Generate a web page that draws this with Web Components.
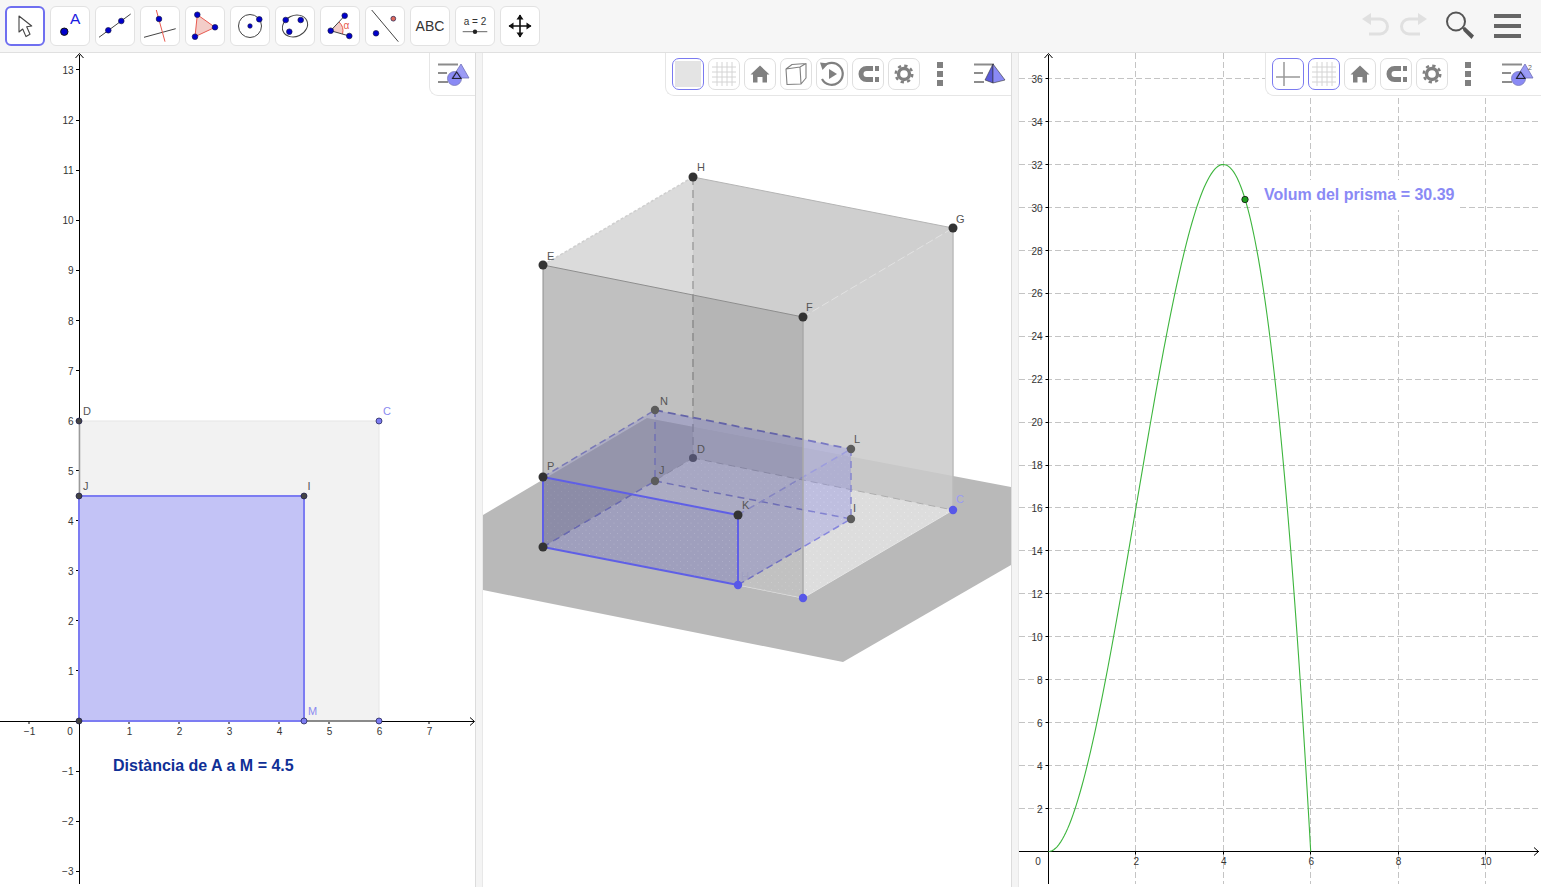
<!DOCTYPE html>
<html>
<head>
<meta charset="utf-8">
<title>GeoGebra</title>
<style>
  html, body { margin: 0; height: 100%; overflow: hidden; background: #fff; font-family: "Liberation Sans", Arial, sans-serif; }
</style>
</head>
<body>
<ggb-app>
  <ggb-toolbar slot="toolbar">
    <ggb-tool icon="move" selected></ggb-tool>
    <ggb-tool icon="point"></ggb-tool>
    <ggb-tool icon="line"></ggb-tool>
    <ggb-tool icon="perp"></ggb-tool>
    <ggb-tool icon="polygon"></ggb-tool>
    <ggb-tool icon="circle"></ggb-tool>
    <ggb-tool icon="conic"></ggb-tool>
    <ggb-tool icon="angle"></ggb-tool>
    <ggb-tool icon="reflect"></ggb-tool>
    <ggb-tool icon="text"></ggb-tool>
    <ggb-tool icon="slider"></ggb-tool>
    <ggb-tool icon="pan"></ggb-tool>
  </ggb-toolbar>
  <ggb-panel slot="left" style="width:475px">
    <ggb-square-view></ggb-square-view>
    <ggb-stylebar slot="bar" view="plane"></ggb-stylebar>
  </ggb-panel>
  <ggb-panel slot="middle" style="width:528px">
    <ggb-prism-view></ggb-prism-view>
    <ggb-stylebar slot="bar" view="solid" more>
      <ggb-style-btn icon="plane" active></ggb-style-btn>
      <ggb-style-btn icon="grid"></ggb-style-btn>
      <ggb-style-btn icon="home"></ggb-style-btn>
      <ggb-style-btn icon="cube"></ggb-style-btn>
      <ggb-style-btn icon="rotate"></ggb-style-btn>
      <ggb-style-btn icon="magnet"></ggb-style-btn>
      <ggb-style-btn icon="gear"></ggb-style-btn>
    </ggb-stylebar>
  </ggb-panel>
  <ggb-panel slot="right" style="width:522px">
    <ggb-volume-view></ggb-volume-view>
    <ggb-stylebar slot="bar" view="plane2" more style="padding-right:6px">
      <ggb-style-btn icon="axes" active></ggb-style-btn>
      <ggb-style-btn icon="grid" active></ggb-style-btn>
      <ggb-style-btn icon="home"></ggb-style-btn>
      <ggb-style-btn icon="magnet"></ggb-style-btn>
      <ggb-style-btn icon="gear"></ggb-style-btn>
    </ggb-stylebar>
  </ggb-panel>
</ggb-app>

<script>
const BLUE = "#0000cc";
const dot = (x, y, r = 2.800, fill = BLUE) => `<circle cx="${x}" cy="${y}" r="${r}" fill="${fill}" stroke="#1a1a4a" stroke-width=".7"/>`;
const ln = (a, b, c, d, stroke = "#444", w = 1, extra = "") => `<line x1="${a}" y1="${b}" x2="${c}" y2="${d}" stroke="${stroke}" stroke-width="${w}" ${extra}/>`;
const txt = (x, y, s, size, fill, extra = "") => `<text x="${x}" y="${y}" font-size="${size}" fill="${fill}" font-family="'Liberation Sans', Arial, sans-serif" ${extra}>${s}</text>`;
const pts = list => list.map(p => p.join(",")).join(" ");
const crisp = v => Math.floor(v) + .5;

class GgbApp extends HTMLElement {
  constructor() {
    super();
    this.attachShadow({ mode: "open" });
    this.shadowRoot.innerHTML = `
      <style>
        :host { display: flex; flex-direction: column; width: 1541px; height: 887px; }
        .views { display: flex; flex: 1; min-height: 0; }
        .gutter { flex: none; width: 6px; background: #f4f4f4; border-left: 1px solid #dcdcdc; border-right: 1px solid #e8e8e8; }
      </style>
      <slot name="toolbar"></slot>
      <div class="views">
        <slot name="left"></slot>
        <div class="gutter"></div>
        <slot name="middle"></slot>
        <div class="gutter"></div>
        <slot name="right"></slot>
      </div>
    `;
  }
}

class GgbToolbar extends HTMLElement {
  constructor() {
    super();
    this.attachShadow({ mode: "open" });
    this.shadowRoot.innerHTML = `
      <style>
        :host { display: flex; align-items: center; flex: none; box-sizing: border-box; height: 53px; padding: 0 20px 1px 5px; background: #f6f6f6; border-bottom: 1px solid #e0e0e0; }
        .tools { display: flex; gap: 5px; }
        .actions { display: flex; align-items: center; margin-left: auto; }
        svg { display: block; }
        .redo { margin-left: 9px; }
        .search { margin-left: 18px; }
        .menu { margin-left: 19px; }
      </style>
      <div class="tools"><slot></slot></div>
      <div class="actions">
        <svg width="28" height="26" viewBox="0 0 28 26"><path d="M8 6H18a7.500 7.500 0 0 1 0 15H7" fill="none" stroke="#e0e0e0" stroke-width="3"/><path d="M0 6 9 0V12Z" fill="#e0e0e0"/></svg>
        <svg class="redo" width="28" height="26" viewBox="0 0 28 26"><path d="M20 6H10a7.500 7.500 0 0 0 0 15H21" fill="none" stroke="#e0e0e0" stroke-width="3"/><path d="M28 6 19 0V12Z" fill="#e0e0e0"/></svg>
        <svg class="search" width="30" height="30" viewBox="0 0 30 30"><circle cx="11" cy="10.500" r="9" fill="none" stroke="#555" stroke-width="2"/><path d="M17.500 17 20 16 29 24.500 26.500 28 18.500 20Z" fill="#555"/></svg>
        <svg class="menu" width="27" height="24" viewBox="0 0 27 24"><path d="M0 0H27V4H0ZM0 10H27V14H0ZM0 20H27V24H0Z" fill="#666"/></svg>
      </div>
    `;
  }
}

class GgbTool extends HTMLElement {
  static icons = {
    move: `<path d="M14 10V26L17.700 23 21 30.600 25 28.300 21.700 20.700 26.700 20Z" fill="#fff" stroke="#444" stroke-width="1.100" stroke-linejoin="round"/>`,
    point: `<circle cx="14.300" cy="25.700" r="3.700" fill="${BLUE}" stroke="#111"/>` + txt(20, 17.500, "A", 15.500, "#1a1ae0"),
    line: ln(4, 31.300, 35.700, 8) + dot(13.300, 24.300) + dot(26.300, 15),
    perp: ln(4, 31.300, 35.700, 22.700) + ln(16.300, 4, 25, 35.700, "#e85a50") + dot(19, 13),
    polygon: `<polygon points="12.300,8.700 30,21.300 10,30.700" fill="#f3cdc8" stroke="#e85a50"/>` + dot(12.300, 8.700) + dot(30, 21.300) + dot(10, 30.700),
    circle: `<circle cx="20" cy="20" r="11.500" fill="none" stroke="#444"/>` + dot(20, 20, 2.200) + dot(29.300, 13.300),
    conic: `<ellipse cx="20" cy="20" rx="13" ry="10.500" fill="none" stroke="#444" transform="rotate(-25 20 20)"/>` + dot(10.700, 14) + dot(25.700, 14) + dot(14.300, 25.700),
    angle: `<path d="M10.700 24.700 19 16 A12 12 0 0 1 22.500 28Z" fill="#f3cdc8" stroke="none"/><path d="M19 16A12 12 0 0 1 22.500 28" fill="none" stroke="#e85a50"/>` + ln(10.700, 24.700, 24.700, 9.700) + ln(10.700, 24.700, 29.300, 30) + dot(10.700, 24.700) + dot(24.700, 9.700) + dot(29.300, 30) + txt(23.500, 23, "α", 10, "#e85a50"),
    reflect: ln(6.700, 4, 33.300, 35.700) + dot(11, 27.300) + dot(28.300, 12.700, 2.400, "#e06a5c"),
    text: txt(20, 25, "ABC", 14, "#333", `text-anchor="middle"`),
    slider: txt(20, 19, "a = 2", 10, "#333", `text-anchor="middle"`) + ln(7.700, 25.700, 32.300, 25.700, "#666") + `<circle cx="20" cy="25.700" r="2.200" fill="#222"/>`,
    pan: `<path d="M20 9V31M9 20H31" stroke="#111" stroke-width="1.600"/><path d="M20 8.500 23.500 13.500H16.500ZM20 31.500 16.500 26.500H23.500ZM8.500 20 13.500 16.500V23.500ZM31.500 20 26.500 23.500V16.500Z" fill="#111"/>`,
  };

  constructor() {
    super();
    this.attachShadow({ mode: "open" });
  }

  connectedCallback() {
    this.shadowRoot.innerHTML = `
      <style>
        :host { display: block; box-sizing: border-box; width: 40px; height: 40px; background: #fff; border: 1px solid #e2e2e2; border-radius: 6px; }
        :host([selected]) { border: 2px solid #6f6ff0; }
        svg { display: block; margin: -1px; }
        :host([selected]) svg { margin: -2px; }
      </style>
      <svg width="40" height="40" viewBox="0 0 40 40">${GgbTool.icons[this.getAttribute("icon")]}</svg>
    `;
  }
}

class GgbPanel extends HTMLElement {
  constructor() {
    super();
    this.attachShadow({ mode: "open" });
    this.shadowRoot.innerHTML = `
      <style>
        :host { display: block; position: relative; flex: none; height: 100%; overflow: hidden; background: #fff; }
        .bar { position: absolute; top: 0; right: 0; }
      </style>
      <slot></slot>
      <div class="bar"><slot name="bar"></slot></div>
    `;
  }
}

class GgbStylebar extends HTMLElement {
  static planeArt = `<circle cx="16.500" cy="19.500" r="7" fill="#8a8af5" stroke="#7a7ab8" stroke-width=".8"/><path d="M23 5 31 19H14Z" fill="#8a8af5" fill-opacity=".85" stroke="#6e6eb8" stroke-width=".8"/><path d="M18.700 13 23 19.500H14.500Z" fill="none" stroke="#223" stroke-width="1.100"/>`;
  static views = {
    plane: GgbStylebar.planeArt,
    plane2: GgbStylebar.planeArt + txt(26, 11, "2", 7, "#666"),
    solid: `<path d="M19 5 11 21 19 24Z" fill="#5a5ad8" stroke="#333" stroke-width=".6"/><path d="M19 5 31 21 19 24Z" fill="#8a8af5" stroke="#333" stroke-width=".6"/>`,
  };

  constructor() {
    super();
    this.attachShadow({ mode: "open" });
  }

  connectedCallback() {
    const more = this.hasAttribute("more");
    const art = GgbStylebar.views[this.getAttribute("view")];
    this.shadowRoot.innerHTML = `
      <style>
        :host { display: flex; align-items: center; box-sizing: border-box; height: 43px; padding: 0 4px 0 ${more ? 6 : 8}px; background: #fff; border-left: 1px solid #e6e6e6; border-bottom: 1px solid #e6e6e6; border-bottom-left-radius: 9px; }
        .btns { display: flex; gap: 4px; }
        .more { display: flex; flex-direction: column; gap: 3px; margin: 0 31px 0 17px; }
        .more i { display: block; width: 6px; height: 6px; background: #808080; }
        svg { display: block; flex: none; }
      </style>
      <div class="btns"><slot></slot></div>
      ${more ? `<div class="more"><i></i><i></i><i></i></div>` : ""}
      <svg width="33" height="30" viewBox="0 0 33 30">
        <path d="M0 5.500H20M0 14H9M0 23H10" stroke="#8c8c8c" stroke-width="2"/>
        ${art}
      </svg>
    `;
  }
}

class GgbStyleBtn extends HTMLElement {
  static icons = {
    plane: `<rect x="3" y="3" width="26" height="26" fill="#e4e4e4"/>`,
    axes: `<path d="M12 4V28M4 19H28" stroke="#999" stroke-width="1.500"/>`,
    grid: `<path d="M9 4V28M14 4V28M19 4V28M24 4V28M4 9H28M4 14H28M4 19H28M4 24H28" stroke="#d4d4d4" stroke-width="1"/>`,
    home: `<path d="M16 7.500 25.500 16.500H23V24.500H18.500V19H13.500V24.500H9V16.500H6.500Z" fill="#808080"/>`,
    cube: `<path d="M6 11 20 9 26 5.500V20L21 26 7 26.500ZM6 11 12 6.500 26 5.500M20 9 21 26" fill="none" stroke="#808080" stroke-width="1.100" stroke-linejoin="round"/>`,
    rotate: `<path d="M7.500 8.500A11 11 0 1 1 6 21" fill="none" stroke="#808080" stroke-width="2.200"/><path d="M4 4.500 12.500 5.500 6.500 12Z" fill="#808080"/><path d="M13 11 21 16 13 21Z" fill="#808080"/>`,
    magnet: `<path d="M21 10.500H14.500a5.500 5.500 0 0 0 0 11H21" fill="none" stroke="#808080" stroke-width="5"/><path d="M23 8H27V13H23ZM23 19H27V24H23Z" fill="#808080"/>`,
    gear: `<circle cx="16" cy="16" r="5.500" fill="none" stroke="#808080" stroke-width="3.400"/><circle cx="16" cy="16" r="8.300" fill="none" stroke="#808080" stroke-width="2.400" stroke-dasharray="3.300 3.217"/>`,
  };

  constructor() {
    super();
    this.attachShadow({ mode: "open" });
  }

  connectedCallback() {
    this.shadowRoot.innerHTML = `
      <style>
        :host { display: block; box-sizing: border-box; width: 32px; height: 32px; background: #fff; border: 1px solid #dfdfdf; border-radius: 7px; }
        :host([active]) { border-color: #7a7af0; }
        svg { display: block; margin: -1px; }
      </style>
      <svg width="32" height="32" viewBox="0 0 32 32">${GgbStyleBtn.icons[this.getAttribute("icon")]}</svg>
    `;
  }
}

// The three canvases keep page coordinates in their viewBox
class GgbCanvas extends HTMLElement {
  constructor() {
    super();
    this.attachShadow({ mode: "open" });
  }

  connectedCallback() {
    const r = this.box;
    this.shadowRoot.innerHTML = `
      <style>
        :host { display: block; width: 100%; height: 100%; }
        svg { display: block; }
      </style>
      <svg width="${r[2]}" height="${r[3]}" viewBox="${r.join(" ")}">${this.draw()}</svg>
    `;
  }
}

class GgbSquareView extends GgbCanvas {
  box = [0, 53, 475, 834];

  draw() {
    const ox = 79, oy = 721, u = 50, uy = 50.080;
    let s = "";
    s += `<rect x="${ox}" y="${oy - 300}" width="300" height="300" fill="#f2f2f2" stroke="#e6e6e6"/>`;
    s += ln(0, oy + .5, 474, oy + .5, "#000") + ln(ox + .5, 55, ox + .5, 884, "#000");
    s += `<path d="M470 717.500 474.500 721.500 470 725.500M75.500 58 79.500 53.500 83.500 58" fill="none" stroke="#000"/>`;
    for (let i = -1; i <= 7; i++) {
      if (!i) continue;
      const x = ox + i * u;
      s += ln(x, oy, x, oy + 3, "#000");
      s += txt(x + .5, 735, i < 0 ? "−" + -i : i, 10, "#333", `text-anchor="middle"`);
    }
    s += txt(70, 735, "0", 10, "#333", `text-anchor="middle"`);
    for (let i = -3; i <= 13; i++) {
      if (!i) continue;
      const y = oy - i * uy;
      s += ln(ox - 3, crisp(y), ox, crisp(y), "#000");
      s += txt(73.500, y + 4.200, i < 0 ? "−" + -i : i, 10, "#333", `text-anchor="end"`);
    }
    s += ln(ox + .5, oy, ox + .5, 421, "#9a9a9a", 1.500) + ln(ox, oy, 379, oy, "#8a8a8a", 2);
    s += `<rect x="${ox}" y="496" width="225" height="225" fill="#c3c3f6" stroke="#7c7cf2" stroke-width="2"/>`;
    const dark = "#444", lav = "#7c7cf0";
    s += dot(79, 421, 3, dark) + dot(79, 496, 3, dark) + dot(79, 721, 3, dark) + dot(304, 496, 3, dark);
    s += dot(379, 421, 3, lav) + dot(304, 721, 3, lav) + dot(379, 721, 3, lav);
    s += txt(83, 415, "D", 11, "#555") + txt(83, 490, "J", 11, "#555") + txt(307.500, 490, "I", 11, "#555");
    s += txt(383, 415, "C", 11, "#8a8af0") + txt(308, 715, "M", 11, "#8a8af0");
    s += txt(113, 771, "Distància de A a M = 4.5", 16, "#0f2f96", `font-weight="bold"`);
    return s;
  }
}

class GgbPrismView extends GgbCanvas {
  box = [483, 53, 528, 834];

  draw() {
    const A = [543, 547], B = [803, 598], C = [953, 510], D = [693, 458];
    const E = [543, 265], F = [803, 317], G = [953, 228], H = [693, 177];
    const M = [738, 585], I = [851, 519], J = [655, 481];
    const P = [543, 477], K = [738, 515], L = [851, 449], N = [655, 410];
    const edge = (a, b, stroke, w = 1, dash = "") => ln(a[0], a[1], b[0], b[1], stroke, w, dash ? `stroke-dasharray="${dash}"` : "");
    const face = (list, fill, op) => `<polygon points="${pts(list)}" fill="${fill}" fill-opacity="${op}"/>`;
    let s = `<defs><pattern id="dots" width="7" height="7" patternUnits="userSpaceOnUse"><circle cx="1.500" cy="1.500" r=".5" fill="#fff" fill-opacity=".4"/><circle cx="5" cy="5" r=".5" fill="#fff" fill-opacity=".4"/></pattern></defs>`;
    // ground
    s += `<polygon points="483,515 647,418 1011,487 1011,565 843,662 483,590" fill="#b9b9b9"/>`;
    // big prism, back faces
    s += face([A, D, H, E], "#b8b8b8", .5);
    s += face([D, C, G, H], "#c8c8c8", .87);
    s += face([A, B, C, D], "#dcdcdc", 1) + face([A, B, C, D], "url(#dots)", 1);
    s += edge(D, C, "#aaa", 1, "7 5") + edge(A, D, "#aaa", 1, "7 5");
    s += edge(D, H, "#a0a0a0", 1.500, "8 5") + edge(E, H, "#cfcfcf", 1.500, "3 2") + edge(H, G, "#b4b4b4");
    s += `<circle cx="${D[0]}" cy="${D[1]}" r="4" fill="#555"/>`;
    // small prism
    s += face([J, I, L, N], "#7070e4", .16) + face([A, J, N, P], "#8080ec", .1);
    s += edge(A, J, "#8080c8", 1.500, "7 5") + edge(J, I, "#8080c8", 1.500, "7 5") + edge(N, J, "#8080c8", 1.500, "7 5");
    s += face([A, M, I, J], "#7a7ae6", .14);
    s += face([P, K, L, N], "#8080ec", .14);
    s += face([A, M, K, P], "#5a5ac8", .2) + face([M, I, L, K], "#7070e4", .16);
    s += edge(P, N, "#8a8ad0", 1.500, "7 4") + edge(N, L, "#7272c0", 1.800, "8 5") + edge(K, L, "#9898dc", 1.500, "7 5");
    s += edge(L, I, "#8080cc", 1.500, "7 5") + edge(M, I, "#8080dc", 1.500, "7 4");
    s += edge(M, B, "#e8e8e8");
    s += face([A, M, K, P], "url(#dots)", .4) + face([M, I, L, K], "url(#dots)", .3);
    // big prism, front faces
    s += face([A, B, F, E], "#000", .12);
    s += face([B, C, G, F], "#fff", .05);
    s += edge(A, E, "#8e8e8e") + edge(E, F, "#8e8e8e") + edge(F, B, "#a8a8a8", 1.500);
    s += edge(F, G, "#e2e2e2", 1, "8 3") + edge(G, C, "#bbb", 1.500) + edge(B, C, "#e6e6e6");
    // bright small prism edges
    s += edge(A, P, "#5f5fe6", 2) + edge(P, K, "#5f5fe6", 2) + edge(K, M, "#5f5fe6", 2) + edge(A, M, "#5f5fe6", 2);
    const darkPt = "#333", midPt = "#5c5c5c", bluePt = "#5858e8";
    for (const p of [E, F, G, H, P, K, A]) s += `<circle cx="${p[0]}" cy="${p[1]}" r="4.500" fill="${darkPt}"/>`;
    for (const p of [N, L, I, J]) s += `<circle cx="${p[0]}" cy="${p[1]}" r="4.200" fill="${midPt}"/>`;
    for (const p of [B, C, M]) s += `<circle cx="${p[0]}" cy="${p[1]}" r="4.200" fill="${bluePt}"/>`;
    const labels = [["H", 697, 171], ["G", 956, 223], ["E", 547, 260], ["F", 806, 311], ["N", 660, 405], ["L", 854, 443], ["D", 697, 453], ["J", 659, 474], ["P", 547, 470], ["K", 742, 509], ["I", 853, 512]];
    for (const [t, x, y] of labels) s += txt(x, y, t, 11, "#555");
    s += txt(956, 503, "C", 11, "#9a9af5") + txt(741, 580, "H", 11, "#a0a0c0");
    return s;
  }
}

class GgbVolumeView extends GgbCanvas {
  box = [1019, 53, 522, 834];

  draw() {
    const ox = 1048.500, oy = 851.500, ux = 43.700, uy = 21.470;
    let s = "";
    const grid = `stroke-dasharray="6 3"`;
    for (let i = 2; i <= 10; i += 2) s += ln(crisp(ox + i * ux), 53, crisp(ox + i * ux), 884, "#c4c4c4", 1, grid);
    for (let i = 2; i <= 36; i += 2) s += ln(1019, crisp(oy - i * uy), 1541, crisp(oy - i * uy), "#c4c4c4", 1, grid);
    s += ln(1019, oy, 1539, oy, "#000") + ln(ox, 55, ox, 884, "#000");
    s += `<path d="M1534 847.500 1538.500 851.500 1534 855.500M1044.500 58 1048.500 53.500 1052.500 58" fill="none" stroke="#000"/>`;
    for (let i = 2; i <= 10; i += 2) {
      const x = ox + i * ux;
      s += ln(crisp(x), oy, crisp(x), oy + 3, "#000");
      s += txt(x + .5, 865, i, 10, "#333", `text-anchor="middle"`);
    }
    s += txt(1038, 865, "0", 10, "#333", `text-anchor="middle"`);
    for (let i = 2; i <= 36; i += 2) {
      const y = oy - i * uy;
      s += ln(ox - 3, crisp(y), ox, crisp(y), "#000");
      s += txt(1042.500, y + 4.200, i, 10, "#333", `text-anchor="end"`);
    }
    const curve = [];
    for (let x = 0; x <= 6.0001; x += 0.04) curve.push([+(ox + x * ux).toFixed(2), +(oy - x * x * (6 - x) * uy).toFixed(2)]);
    s += `<polyline points="${pts(curve)}" fill="none" stroke="#3db53d" stroke-width="1.100"/>`;
    s += `<circle cx="1245" cy="199.500" r="3.200" fill="#1e9e1e" stroke="#111" stroke-width=".8"/>`;
    // the caption sits on a white box that cuts the grid
    s += `<rect x="1259" y="180" width="200" height="30" fill="#fff"/>`;
    s += txt(1264, 200, "Volum del prisma = 30.39", 16, "#8a8af5", `font-weight="bold"`);
    return s;
  }
}

customElements.define("ggb-app", GgbApp);
customElements.define("ggb-toolbar", GgbToolbar);
customElements.define("ggb-tool", GgbTool);
customElements.define("ggb-panel", GgbPanel);
customElements.define("ggb-stylebar", GgbStylebar);
customElements.define("ggb-style-btn", GgbStyleBtn);
customElements.define("ggb-square-view", GgbSquareView);
customElements.define("ggb-prism-view", GgbPrismView);
customElements.define("ggb-volume-view", GgbVolumeView);
</script>
</body>
</html>
